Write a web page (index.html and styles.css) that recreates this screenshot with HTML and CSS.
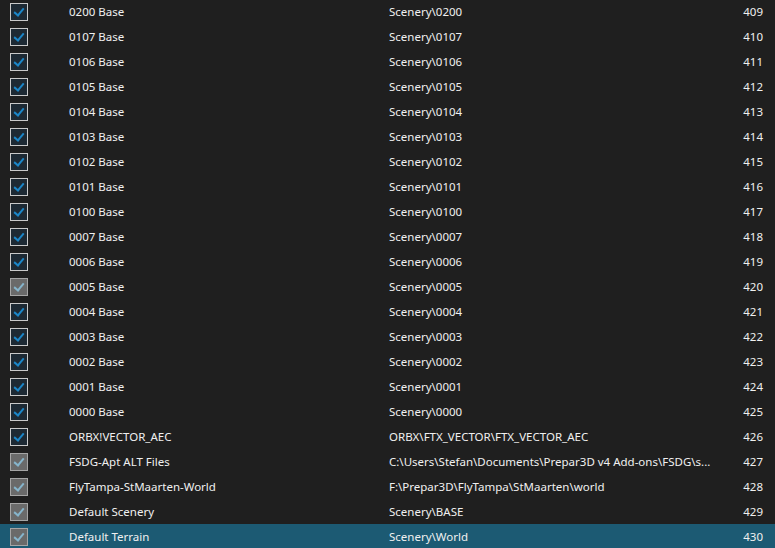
FILE: index.html
```html
<!DOCTYPE html>
<html lang="en">
<head>
    <meta charset="UTF-8">
    <title>Scenery Library</title>
    <link rel="stylesheet" href="styles.css">
</head>
<body>
    <div class="list">
        <div class="row"><span class="check"></span><span class="name">0200 Base</span><span class="path">Scenery\0200</span><span class="num">409</span></div>
        <div class="row"><span class="check"></span><span class="name">0107 Base</span><span class="path">Scenery\0107</span><span class="num">410</span></div>
        <div class="row"><span class="check"></span><span class="name">0106 Base</span><span class="path">Scenery\0106</span><span class="num">411</span></div>
        <div class="row"><span class="check"></span><span class="name">0105 Base</span><span class="path">Scenery\0105</span><span class="num">412</span></div>
        <div class="row"><span class="check"></span><span class="name">0104 Base</span><span class="path">Scenery\0104</span><span class="num">413</span></div>
        <div class="row"><span class="check"></span><span class="name">0103 Base</span><span class="path">Scenery\0103</span><span class="num">414</span></div>
        <div class="row"><span class="check"></span><span class="name">0102 Base</span><span class="path">Scenery\0102</span><span class="num">415</span></div>
        <div class="row"><span class="check"></span><span class="name">0101 Base</span><span class="path">Scenery\0101</span><span class="num">416</span></div>
        <div class="row"><span class="check"></span><span class="name">0100 Base</span><span class="path">Scenery\0100</span><span class="num">417</span></div>
        <div class="row"><span class="check"></span><span class="name">0007 Base</span><span class="path">Scenery\0007</span><span class="num">418</span></div>
        <div class="row"><span class="check"></span><span class="name">0006 Base</span><span class="path">Scenery\0006</span><span class="num">419</span></div>
        <div class="row"><span class="check disabled"></span><span class="name">0005 Base</span><span class="path">Scenery\0005</span><span class="num">420</span></div>
        <div class="row"><span class="check"></span><span class="name">0004 Base</span><span class="path">Scenery\0004</span><span class="num">421</span></div>
        <div class="row"><span class="check"></span><span class="name">0003 Base</span><span class="path">Scenery\0003</span><span class="num">422</span></div>
        <div class="row"><span class="check"></span><span class="name">0002 Base</span><span class="path">Scenery\0002</span><span class="num">423</span></div>
        <div class="row"><span class="check"></span><span class="name">0001 Base</span><span class="path">Scenery\0001</span><span class="num">424</span></div>
        <div class="row"><span class="check"></span><span class="name">0000 Base</span><span class="path">Scenery\0000</span><span class="num">425</span></div>
        <div class="row"><span class="check"></span><span class="name">ORBX!VECTOR_AEC</span><span class="path">ORBX\FTX_VECTOR\FTX_VECTOR_AEC</span><span class="num">426</span></div>
        <div class="row"><span class="check disabled"></span><span class="name">FSDG-Apt ALT Files</span><span class="path">C:\Users\Stefan\Documents\Prepar3D v4 Add-ons\FSDG\s...</span><span class="num">427</span></div>
        <div class="row"><span class="check disabled"></span><span class="name">FlyTampa-StMaarten-World</span><span class="path">F:\Prepar3D\FlyTampa\StMaarten\world</span><span class="num">428</span></div>
        <div class="row"><span class="check disabled"></span><span class="name">Default Scenery</span><span class="path">Scenery\BASE</span><span class="num">429</span></div>
        <div class="row selected"><span class="check disabled"></span><span class="name">Default Terrain</span><span class="path">Scenery\World</span><span class="num">430</span></div>
    </div>
</body>
</html>
```

FILE: styles.css
```css
body {
    margin: 0;
    background-color: #1f1f1f;
    font-family: "Noto Sans", "Open Sans", sans-serif;
    font-size: 11.5px;
    color: #f0f0f0;
    overflow: hidden;
}

.list {
    margin-top: -1px;
}

.row {
    display: flex;
    align-items: center;
    height: 25px;
}

.row.selected {
    background-color: #1c5a73;
}

.check {
    box-sizing: border-box;
    width: 18px;
    height: 18px;
    margin-left: 10px;
    border: 1px solid #c9c9c9;
    background-color: #1d2933;
    position: relative;
}

.check::after {
    content: "";
    position: absolute;
    left: 5px;
    top: 2px;
    width: 4px;
    height: 8px;
    border: solid #1b86c8;
    border-width: 0 2px 2px 0;
    transform: rotate(40deg);
}

.check.disabled {
    background-color: #6a6a6a;
    border-color: #a5a5a5;
}

.check.disabled::after {
    border-color: #86b5cc;
}

.name,
.path,
.num {
    padding-bottom: 1px;
}

.name {
    width: 320px;
    margin-left: 41px;
}

.path {
    width: 330px;
    white-space: nowrap;
    overflow: hidden;
}

.num {
    width: 44px;
    text-align: right;
}
```
